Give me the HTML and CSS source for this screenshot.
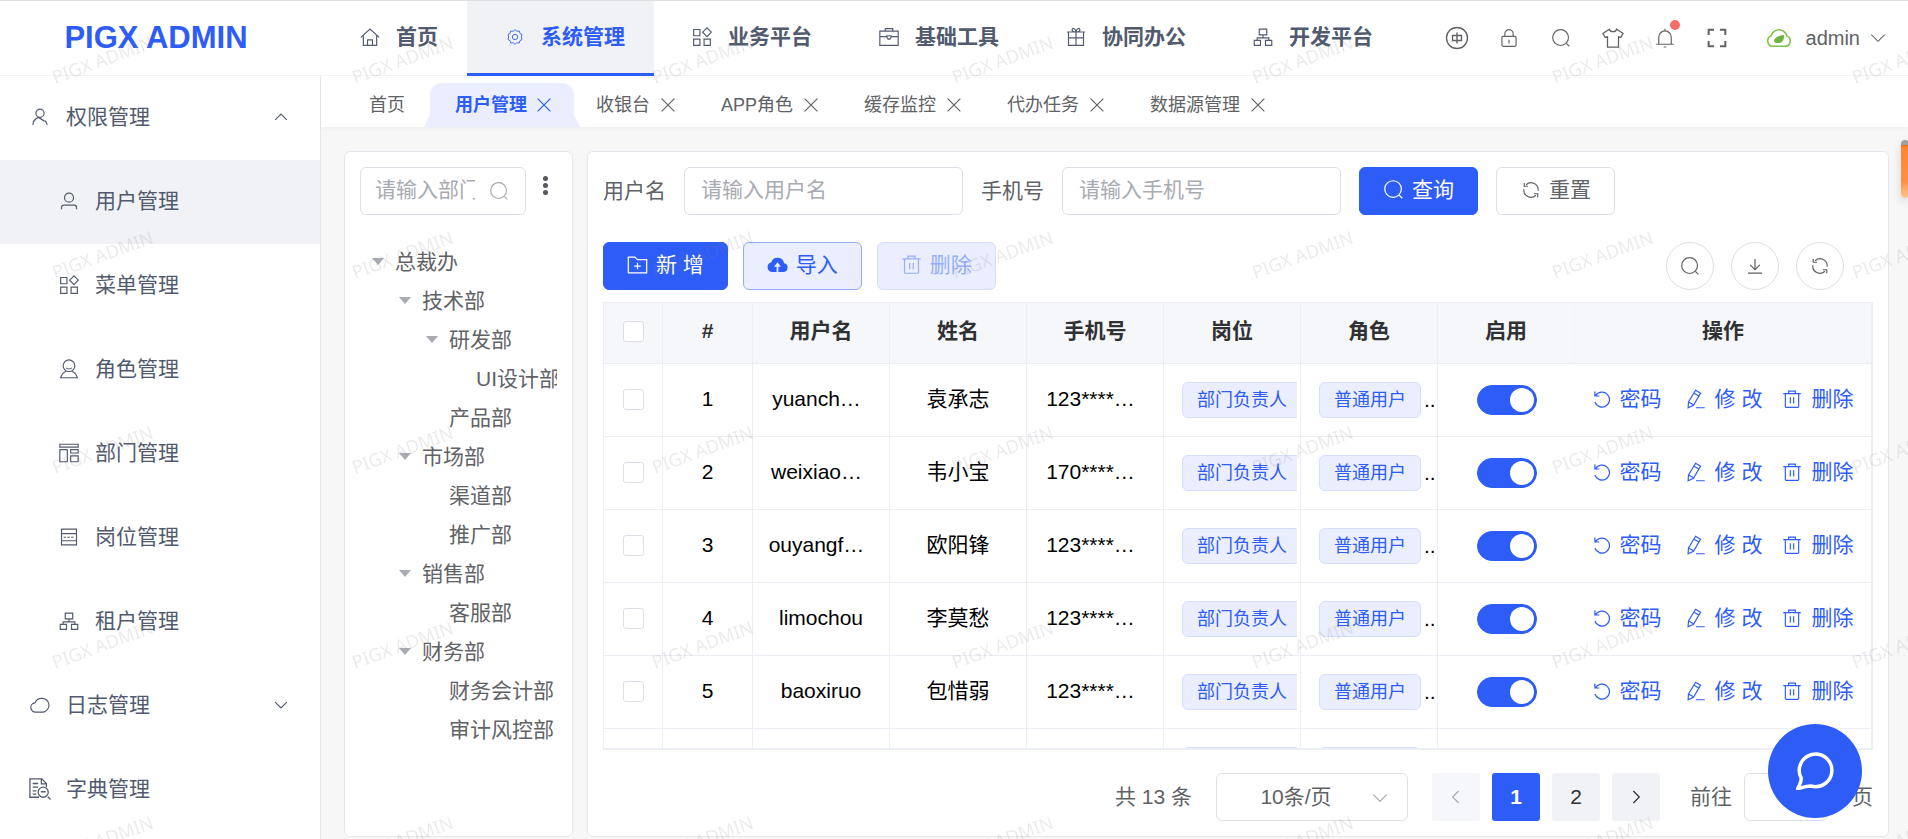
FILE: index.html
```html
<!DOCTYPE html>
<html lang="zh-CN">
<head>
<meta charset="utf-8">
<title>PIGX ADMIN</title>
<link rel="stylesheet" href="styles.css">
</head>
<body>
<svg class="sprite" aria-hidden="true">
  <symbol id="i-home" viewBox="0 0 24 24"><path d="M1 12.500 12 2.500l11 10M4 10v12h16V10M9 22v-6.500h6V22"/></symbol>
  <symbol id="i-gear" viewBox="0 0 24 24"><path d="M12 1l2.800 2.400 3.600-.4 1 3.500 3.100 1.800-1 3.700 1 3.700-3.100 1.800-1 3.500-3.600-.4L12 23l-2.800-2.400-3.600.4-1-3.500-3.100-1.800 1-3.700-1-3.700 3.100-1.800 1-3.500 3.600.4z"/><circle cx="12" cy="12" r="4"/></symbol>
  <symbol id="i-menu" viewBox="0 0 24 24"><path d="M2 3h7.500v7.500H2zM2 14.500h7.500V22H2zM14.500 14.500H22V22h-7.500zM18 1l5.200 5.200L18 11.500l-5.200-5.300z"/></symbol>
  <symbol id="i-case" viewBox="0 0 24 24"><path d="M1 5h22v17H1zM7.500 5V2h9v3M1 11.500h8.500M14.500 11.500H23M9.500 10.500h5v2l-1.500 2h-2l-1.500-2z"/></symbol>
  <symbol id="i-gift" viewBox="0 0 24 24"><path d="M1 6h22M3 6v16h18V6M3 13h18M12 6v16M12 6C8 6 6.500 4 7.500 2.500S11.500 2 12 6c.5-4 3.500-5 4.500-3.500S16 6 12 6"/></symbol>
  <symbol id="i-org" viewBox="0 0 24 24"><path d="M7.500 2.500h9v7h-9zM1.500 16h7.500v6H1.500zM15 16h7.500v6H15zM12 9.500V13M5 16v-3h14v3"/></symbol>
  <symbol id="i-lang" viewBox="0 0 24 24"><circle cx="12" cy="12" r="10.500"/><path d="M7.500 9.500h9v5h-9zM12 6.500v11"/></symbol>
  <symbol id="i-lock" viewBox="0 0 24 24"><path d="M5 10h14a1.500 1.500 0 0 1 1.500 1.500v9A1.500 1.500 0 0 1 19 22H5a1.500 1.500 0 0 1-1.500-1.500v-9A1.500 1.500 0 0 1 5 10zM7 10V7a5 5 0 0 1 10 0v3M12 14v4.500"/></symbol>
  <symbol id="i-search" viewBox="0 0 24 24"><circle cx="11.500" cy="11.500" r="9.500"/><path d="M18.500 18.500 22 22"/></symbol>
  <symbol id="i-shirt" viewBox="0 0 24 24"><path d="M8 2.500 1 7l2.500 4.500L6 10.500V22h12V10.500l2.500 1L23 7l-7-4.500C15 6 9 6 8 2.500z"/></symbol>
  <symbol id="i-bell" viewBox="0 0 24 24"><path d="M12 1v2.500M1.500 19.500h21M4.500 19.500V11a7.500 7.500 0 0 1 15 0v8.500M10.500 22.800h3"/></symbol>
  <symbol id="i-full" viewBox="0 0 24 24"><path d="M2 8.500V2h6.500M15.500 2H22v6.500M22 15.500V22h-6.500M8.500 22H2v-6.500"/></symbol>
  <symbol id="i-down" viewBox="0 0 24 24"><path d="M2 7l10 10L22 7"/></symbol>
  <symbol id="i-up" viewBox="0 0 24 24"><path d="M2 17 12 7l10 10"/></symbol>
  <symbol id="i-left" viewBox="0 0 24 24"><path d="M16 3 7 12l9 9"/></symbol>
  <symbol id="i-right" viewBox="0 0 24 24"><path d="M8 3l9 9-9 9"/></symbol>
  <symbol id="i-close" viewBox="0 0 24 24"><path d="M3.500 3.500l17 17M20.500 3.500l-17 17"/></symbol>
  <symbol id="i-person" viewBox="0 0 24 24"><circle cx="12" cy="7" r="5.500"/><path d="M2.500 22.500c0-5 3-8 7.500-10l8 5M21.500 22.500c0-2-1-4-3-5.500"/></symbol>
  <symbol id="i-user" viewBox="0 0 24 24"><circle cx="12" cy="7.500" r="6"/><path d="M2 23v-2.500a3 3 0 0 1 3-3h14a3 3 0 0 1 3 3V23"/></symbol>
  <symbol id="i-role" viewBox="0 0 24 24"><circle cx="12" cy="8" r="7"/><path d="M8.500 10.500c1.500 2 5.500 2 7 0M8.500 15C5 16 3 19 2 22.500h20c-1-3.500-3-6.500-6.500-7.500"/></symbol>
  <symbol id="i-dept" viewBox="0 0 24 24"><path d="M1 1.500h22V5H1zM1 8h9v14.500H1zM14 8h9v4h-9zM14 15.500h9v7h-9z"/></symbol>
  <symbol id="i-post" viewBox="0 0 24 24"><path d="M3 2.500h18v19H3zM3 8h18M3 16.500h18"/><path d="M5.500 12.300h13" stroke-dasharray="3 1.500"/></symbol>
  <symbol id="i-cloud" viewBox="0 0 24 24"><path d="M7 20.500a5.500 5.500 0 0 1-1-11A8.500 8.500 0 0 1 14 4a8.300 8.300 0 0 1 3 16.200c-1 .3-2 .3-3 .3z"/></symbol>
  <symbol id="i-dict" viewBox="0 0 24 24"><path d="M11 21H1V1h13l5 5v4M13.500 1v5.500H19M4 6h6M4 10h6M4 14h4M4 17.500h4M20.500 20.500 23.500 23.500M13 15h5"/><circle cx="15.500" cy="15.500" r="5.500"/></symbol>
  <symbol id="i-refresh" viewBox="0 0 24 24"><path d="M21.500 13a9.500 9.500 0 0 0-16-8M2.500 11a9.500 9.500 0 0 0 16 8M3 2.500V7h5M21 21.500V17h-5"/></symbol>
  <symbol id="i-addfolder" viewBox="0 0 24 24"><path d="M1.500 3.500h7.500l3 3h10.500v15h-21zM12 10v7.500M8.300 13.800h7.500"/></symbol>
  <symbol id="i-upload" viewBox="0 0 24 24"><path fill="currentColor" stroke="none" d="M13 20.500h5.500a5 5 0 0 0 1-9.900A7.500 7.500 0 0 0 5 9.500a5.600 5.600 0 0 0 .5 11H11v-6H8l4-5 4 5h-3z"/></symbol>
  <symbol id="i-trash" viewBox="0 0 24 24"><path d="M1.500 5.500h21M8 5.500v-3h8v3M4 5.500v15.500a1 1 0 0 0 1 1h14a1 1 0 0 0 1-1V5.500M10 10v7.500M14 10v7.500"/></symbol>
  <symbol id="i-download" viewBox="0 0 24 24"><path d="M12 2.500v14M5.500 10.500l6.500 6.500 6.500-6.500M2.500 21.500h19"/></symbol>
  <symbol id="i-undo" viewBox="0 0 24 24"><path d="M3.500 7.500A10 10 0 1 1 2.500 16M2.500 2v6h6"/></symbol>
  <symbol id="i-edit" viewBox="0 0 24 24"><path d="M11.500 1.500l6 3.500-8.500 14.500-6.500 3 .5-7zM9.500 5l6 3.500M3 15.500l6 3.500M12 22.500h10.500"/></symbol>
  <symbol id="i-leaf" viewBox="0 0 30 24"><path fill="none" stroke="#7dc24b" stroke-width="1.800" d="M8 22a6.500 6.500 0 0 1-2.500-12.500C7 4 12 2 15 2s8 2 9.500 7.500A6.500 6.500 0 0 1 22 22z"/><path fill="#6db33f" stroke="none" d="M9 16.500c0-5 4-7 12-8 .5 6-2.500 10-8 9.500-1.500 0-2.500-.3-3.500-.8z"/></symbol>
  <symbol id="i-chat" viewBox="0 0 24 24"><path stroke-linejoin="round" d="M1 23.300C2.500 20.500 3.400 18.500 3.300 16.500A10.300 10.300 0 1 1 9.500 21.500C6.500 21.500 4 22.300 1 23.300z"/></symbol>
</svg>

<header class="topbar">
  <a class="logo" href="#">PIGX ADMIN</a>
  <nav class="topnav">
    <a href="#"><span class="nav-icon"><svg class="icon"><use href="#i-home"/></svg></span>首页</a>
    <a href="#" class="active"><span class="nav-icon"><svg class="icon thin"><use href="#i-gear"/></svg></span>系统管理</a>
    <a href="#"><span class="nav-icon"><svg class="icon"><use href="#i-menu"/></svg></span>业务平台</a>
    <a href="#"><span class="nav-icon"><svg class="icon"><use href="#i-case"/></svg></span>基础工具</a>
    <a href="#"><span class="nav-icon"><svg class="icon"><use href="#i-gift"/></svg></span>协同办公</a>
    <a href="#"><span class="nav-icon"><svg class="icon"><use href="#i-org"/></svg></span>开发平台</a>
  </nav>
  <div class="tools">
    <button type="button" aria-label="语言"><svg class="icon s24"><use href="#i-lang"/></svg></button>
    <button type="button" aria-label="锁屏"><svg class="icon s20"><use href="#i-lock"/></svg></button>
    <button type="button" aria-label="搜索"><svg class="icon s20"><use href="#i-search"/></svg></button>
    <button type="button" aria-label="主题"><svg class="icon s22"><use href="#i-shirt"/></svg></button>
    <button type="button" aria-label="消息" class="bell"><svg class="icon s20"><use href="#i-bell"/></svg><span class="dot"></span></button>
    <button type="button" aria-label="全屏"><svg class="icon bold s20"><use href="#i-full"/></svg></button>
  </div>
  <button type="button" class="account"><svg class="leaf"><use href="#i-leaf"/></svg>admin<svg class="icon s16"><use href="#i-down"/></svg></button>
</header>

<div class="body">
  <aside class="sidebar">
    <a href="#"><span class="side-icon"><svg class="icon s18"><use href="#i-person"/></svg></span>权限管理<svg class="icon s14 arrow"><use href="#i-up"/></svg></a>
    <a href="#" class="sub active"><span class="side-icon"><svg class="icon s18"><use href="#i-user"/></svg></span>用户管理</a>
    <a href="#" class="sub"><span class="side-icon"><svg class="icon s20"><use href="#i-menu"/></svg></span>菜单管理</a>
    <a href="#" class="sub"><span class="side-icon"><svg class="icon s20"><use href="#i-role"/></svg></span>角色管理</a>
    <a href="#" class="sub"><span class="side-icon"><svg class="icon s20"><use href="#i-dept"/></svg></span>部门管理</a>
    <a href="#" class="sub"><span class="side-icon"><svg class="icon s20"><use href="#i-post"/></svg></span>岗位管理</a>
    <a href="#" class="sub"><span class="side-icon"><svg class="icon s20"><use href="#i-org"/></svg></span>租户管理</a>
    <a href="#"><span class="side-icon"><svg class="icon s20"><use href="#i-cloud"/></svg></span>日志管理<svg class="icon s14 arrow"><use href="#i-down"/></svg></a>
    <a href="#"><span class="side-icon"><svg class="icon s22"><use href="#i-dict"/></svg></span>字典管理</a>
  </aside>

  <div class="content">
    <nav class="tabs">
      <a href="#" class="tab home">首页</a>
      <a href="#" class="tab active">用户管理<svg class="icon s18"><use href="#i-close"/></svg></a>
      <a href="#" class="tab">收银台<svg class="icon s18"><use href="#i-close"/></svg></a>
      <a href="#" class="tab">APP角色<svg class="icon s18"><use href="#i-close"/></svg></a>
      <a href="#" class="tab">缓存监控<svg class="icon s18"><use href="#i-close"/></svg></a>
      <a href="#" class="tab">代办任务<svg class="icon s18"><use href="#i-close"/></svg></a>
      <a href="#" class="tab">数据源管理<svg class="icon s18"><use href="#i-close"/></svg></a>
    </nav>

    <main class="main">
      <section class="panel depts">
        <div class="dept-search">
          <label class="field"><input type="text" placeholder="请输入部门名称" aria-label="部门名称"><svg class="icon s20"><use href="#i-search"/></svg></label>
          <button type="button" class="more" aria-label="更多"><i></i><i></i><i></i></button>
        </div>
        <ul class="tree">
          <li><div class="node"><span class="caret"></span>总裁办</div>
            <ul>
              <li><div class="node"><span class="caret"></span>技术部</div>
                <ul>
                  <li><div class="node"><span class="caret"></span>研发部</div>
                    <ul><li><div class="node leafnode">UI设计部</div></li></ul>
                  </li>
                  <li><div class="node leafnode">产品部</div></li>
                </ul>
              </li>
              <li><div class="node"><span class="caret"></span>市场部</div>
                <ul>
                  <li><div class="node leafnode">渠道部</div></li>
                  <li><div class="node leafnode">推广部</div></li>
                </ul>
              </li>
              <li><div class="node"><span class="caret"></span>销售部</div>
                <ul><li><div class="node leafnode">客服部</div></li></ul>
              </li>
              <li><div class="node"><span class="caret"></span>财务部</div>
                <ul>
                  <li><div class="node leafnode">财务会计部</div></li>
                  <li><div class="node leafnode">审计风控部</div></li>
                </ul>
              </li>
            </ul>
          </li>
        </ul>
      </section>

      <section class="panel users">
        <form class="filters">
          <label for="username">用户名</label>
          <input id="username" type="text" placeholder="请输入用户名">
          <label for="phone">手机号</label>
          <input id="phone" type="text" placeholder="请输入手机号">
          <button type="button" class="btn primary"><svg class="icon s21"><use href="#i-search"/></svg>查询</button>
          <button type="button" class="btn"><svg class="icon s18"><use href="#i-refresh"/></svg>重置</button>
        </form>
        <div class="toolbar">
          <button type="button" class="btn primary"><svg class="icon s21"><use href="#i-addfolder"/></svg>新 增</button>
          <button type="button" class="btn plain"><svg class="icon s21"><use href="#i-upload"/></svg>导入</button>
          <button type="button" class="btn plain" disabled><svg class="icon s21"><use href="#i-trash"/></svg>删除</button>
          <div class="rounds">
            <button type="button" class="round" aria-label="搜索"><svg class="icon s20"><use href="#i-search"/></svg></button>
            <button type="button" class="round" aria-label="下载"><svg class="icon s18"><use href="#i-download"/></svg></button>
            <button type="button" class="round" aria-label="刷新"><svg class="icon s18"><use href="#i-refresh"/></svg></button>
          </div>
        </div>
        <div class="table-box">
          <table>
            <colgroup><col class="c-check"><col class="c-index"><col><col><col><col><col><col><col class="c-actions"></colgroup>
            <thead>
              <tr><th><input type="checkbox" aria-label="全选"></th><th>#</th><th>用户名</th><th>姓名</th><th>手机号</th><th>岗位</th><th>角色</th><th>启用</th><th>操作</th></tr>
            </thead>
            <tbody>
              <tr><td><input type="checkbox" aria-label="选择 1"></td><td>1</td><td class="cut">yuanch…</td><td>袁承志</td><td class="cut">123****…</td>
                <td><div class="cell"><span class="tag">部门负责人</span></div></td><td><div class="cell"><span class="tag">普通用户</span>..</div></td>
                <td><input type="checkbox" class="switch" aria-label="启用" checked></td>
                <td><div class="actions"><button type="button"><svg class="icon s18"><use href="#i-undo"/></svg>密码</button><button type="button"><svg class="icon s20"><use href="#i-edit"/></svg>修 改</button><button type="button"><svg class="icon s20"><use href="#i-trash"/></svg>删除</button></div></td></tr>
              <tr><td><input type="checkbox" aria-label="选择 2"></td><td>2</td><td class="cut">weixiao…</td><td>韦小宝</td><td class="cut">170****…</td>
                <td><div class="cell"><span class="tag">部门负责人</span></div></td><td><div class="cell"><span class="tag">普通用户</span>..</div></td>
                <td><input type="checkbox" class="switch" aria-label="启用" checked></td>
                <td><div class="actions"><button type="button"><svg class="icon s18"><use href="#i-undo"/></svg>密码</button><button type="button"><svg class="icon s20"><use href="#i-edit"/></svg>修 改</button><button type="button"><svg class="icon s20"><use href="#i-trash"/></svg>删除</button></div></td></tr>
              <tr><td><input type="checkbox" aria-label="选择 3"></td><td>3</td><td class="cut">ouyangf…</td><td>欧阳锋</td><td class="cut">123****…</td>
                <td><div class="cell"><span class="tag">部门负责人</span></div></td><td><div class="cell"><span class="tag">普通用户</span>..</div></td>
                <td><input type="checkbox" class="switch" aria-label="启用" checked></td>
                <td><div class="actions"><button type="button"><svg class="icon s18"><use href="#i-undo"/></svg>密码</button><button type="button"><svg class="icon s20"><use href="#i-edit"/></svg>修 改</button><button type="button"><svg class="icon s20"><use href="#i-trash"/></svg>删除</button></div></td></tr>
              <tr><td><input type="checkbox" aria-label="选择 4"></td><td>4</td><td>limochou</td><td>李莫愁</td><td class="cut">123****…</td>
                <td><div class="cell"><span class="tag">部门负责人</span></div></td><td><div class="cell"><span class="tag">普通用户</span>..</div></td>
                <td><input type="checkbox" class="switch" aria-label="启用" checked></td>
                <td><div class="actions"><button type="button"><svg class="icon s18"><use href="#i-undo"/></svg>密码</button><button type="button"><svg class="icon s20"><use href="#i-edit"/></svg>修 改</button><button type="button"><svg class="icon s20"><use href="#i-trash"/></svg>删除</button></div></td></tr>
              <tr><td><input type="checkbox" aria-label="选择 5"></td><td>5</td><td>baoxiruo</td><td>包惜弱</td><td class="cut">123****…</td>
                <td><div class="cell"><span class="tag">部门负责人</span></div></td><td><div class="cell"><span class="tag">普通用户</span>..</div></td>
                <td><input type="checkbox" class="switch" aria-label="启用" checked></td>
                <td><div class="actions"><button type="button"><svg class="icon s18"><use href="#i-undo"/></svg>密码</button><button type="button"><svg class="icon s20"><use href="#i-edit"/></svg>修 改</button><button type="button"><svg class="icon s20"><use href="#i-trash"/></svg>删除</button></div></td></tr>
              <tr><td></td><td></td><td></td><td></td><td></td>
                <td><div class="cell"><span class="tag"></span></div></td><td><div class="cell"><span class="tag"></span></div></td>
                <td></td><td></td></tr>
            </tbody>
          </table>
        </div>
        <div class="pager">
          <span>共 13 条</span>
          <div class="size"><select aria-label="每页条数"><option>10条/页</option></select><svg class="icon s16"><use href="#i-down"/></svg></div>
          <div class="pages">
            <button type="button" disabled aria-label="上一页"><svg class="icon s16"><use href="#i-left"/></svg></button>
            <button type="button" class="current">1</button>
            <button type="button">2</button>
            <button type="button" aria-label="下一页"><svg class="icon s16"><use href="#i-right"/></svg></button>
          </div>
          <label class="jump">前往<input type="text" aria-label="页码"><span>页</span></label>
        </div>
      </section>
    </main>
  </div>
</div>

<div class="side-handle"></div>
<button type="button" class="chat" aria-label="客服"><svg class="icon"><use href="#i-chat"/></svg></button>
<svg class="watermark" aria-hidden="true">
  <defs><pattern id="wm" width="300" height="195" patternUnits="userSpaceOnUse"><text x="55" y="84" transform="rotate(-20 55 84)">PIGX ADMIN</text></pattern></defs>
  <rect width="100%" height="100%" fill="url(#wm)"/>
</svg>
</body>
</html>
```

FILE: styles.css
```css
:root {
  --blue: #2e5cf6;
  --blue-light: #eaeefe;
  --blue-line: #d5defd;
  --slate: #515a6e;
  --text: #606266;
  --line: #ebeef5;
  --field-line: #dcdfe6;
  --muted: #a8abb2;
}

* { box-sizing: border-box; }

body {
  margin: 0;
  height: 100vh;
  display: flex;
  flex-direction: column;
  overflow: hidden;
  font: 21px/30px "Liberation Sans", "Noto Sans CJK SC", sans-serif;
  color: var(--text);
  background: #f7f7f8;
}

a { color: inherit; text-decoration: none; }
button, input, select { font: inherit; color: inherit; }
button { border: 0; background: none; padding: 0; cursor: pointer; }
ul { list-style: none; margin: 0; padding: 0; }
.sprite { display: none; }

.icon {
  width: 20px;
  height: 20px;
  flex: none;
  fill: none;
  stroke: currentColor;
  stroke-width: 1.4;
  overflow: visible;
}
.icon.bold { stroke-width: 2.4; }
.s14 { width: 14px; height: 14px; stroke-width: 2; }
.s16 { width: 16px; height: 16px; stroke-width: 1.8; }
.s18 { width: 18px; height: 18px; stroke-width: 1.6; }
.s20 { width: 20px; height: 20px; }
.s21 { width: 21px; height: 21px; }
.s22 { width: 22px; height: 22px; }
.s24 { width: 24px; height: 24px; }
.icon.thin { width: 16px; height: 16px; stroke-width: 1.3; }

/* Header */
.topbar {
  display: flex;
  flex: none;
  height: 76px;
  border-top: 1px solid #e0e0e0;
  border-bottom: 1px solid #f1f2f3;
  background: #fff;
}
.logo {
  width: 322px;
  flex: none;
  display: flex;
  align-items: center;
  justify-content: center;
  padding-right: 10px;
  font-size: 31px;
  font-weight: bold;
  color: var(--blue);
}
.topnav { display: flex; flex: 1; margin-bottom: -1px; }
.topnav a {
  display: flex;
  align-items: center;
  gap: 8px;
  padding: 0 29px 3px 30px;
  font-weight: bold;
  color: var(--slate);
  white-space: nowrap;
}
.topnav a.active {
  background: #f0f2f5;
  color: var(--blue);
  padding-bottom: 0;
  border-bottom: 3px solid var(--blue);
}
.nav-icon { width: 36px; display: flex; justify-content: center; }
.tools { display: flex; align-items: center; }
.tools button { width: 52px; height: 52px; display: grid; place-items: center; position: relative; }
.dot {
  position: absolute;
  top: 8px;
  right: 11px;
  width: 10px;
  height: 10px;
  border-radius: 50%;
  background: #f56c6c;
}
.account {
  display: flex;
  align-items: center;
  gap: 14px;
  margin: 0 22px 0 23px;
  font-size: 20px;
}
.account .icon { margin-left: -4px; stroke-width: 1.6; }
.leaf { width: 26px; height: 20px; }

/* Sidebar */
.body { display: flex; flex: 1; min-height: 0; }
.sidebar {
  width: 321px;
  flex: none;
  overflow: hidden;
  background: #fff;
  border-right: 1px solid #e4e7f0;
}
.sidebar a {
  display: flex;
  align-items: center;
  height: 84px;
  gap: 8px;
  padding: 0 32px 2px 22px;
  color: var(--slate);
}
.sidebar .sub { padding-left: 51px; }
.sidebar .active { background: #f0f2f5; }
.side-icon { width: 36px; display: flex; justify-content: center; }
.arrow { margin-left: auto; }

/* Tabs */
.content { flex: 1; min-width: 0; display: flex; flex-direction: column; }
.tabs {
  display: flex;
  flex: none;
  height: 51px;
  padding: 7px 0 0 26px;
  background: #fff;
  box-shadow: 0 2px 4px rgba(0, 0, 0, .03);
}
.tab {
  display: flex;
  align-items: center;
  gap: 9px;
  padding: 0 22px;
  font-size: 18px;
  white-space: nowrap;
}
.tab.home { padding-right: 25px; }
.tab.active {
  position: relative;
  gap: 8px;
  padding: 0 21px 0 25px;
  border-radius: 12px 12px 0 0;
  background: var(--blue-light);
  color: var(--blue);
  font-weight: bold;
}
.tab.active::before, .tab.active::after {
  content: "";
  position: absolute;
  bottom: 0;
  width: 6px;
  height: 12px;
  background: var(--blue-light);
}
.tab.active::before { right: 100%; clip-path: polygon(100% 0, 100% 100%, 0 100%); }
.tab.active::after { left: 100%; clip-path: polygon(0 0, 100% 100%, 0 100%); }

/* Panels */
.main { flex: 1; min-height: 0; display: flex; gap: 14px; padding: 24px 19px 2px 23px; }
.panel { background: #fff; border: 1px solid #e4e7ed; border-radius: 6px; padding: 15px; }
.depts { width: 229px; flex: none; overflow: hidden; }
.users { flex: 1; min-width: 0; display: flex; flex-direction: column; }

input[type="text"], select {
  height: 48px;
  padding: 0 16px 3px;
  border: 1px solid var(--field-line);
  border-radius: 6px;
  background: #fff;
  outline: 0;
}
::placeholder { color: var(--muted); opacity: 1; }

.dept-search { display: flex; align-items: flex-start; justify-content: space-between; }
.field {
  display: flex;
  align-items: center;
  width: 166px;
  height: 48px;
  padding: 0 16px 0 14px;
  gap: 14px;
  border: 1px solid var(--field-line);
  border-radius: 6px;
  color: var(--muted);
}
.field input { flex: 1; width: 0; height: 46px; padding: 0 0 3px; border: 0; }
.more { display: flex; flex-direction: column; gap: 2px; padding: 9px 9px 0; }
.more i { width: 5px; height: 5px; border-radius: 50%; background: #55585e; }

.tree { margin-top: 27px; padding-left: 9px; }
.tree ul { padding-left: 27px; }
.node { display: flex; align-items: center; gap: 8px; height: 39px; white-space: nowrap; overflow: hidden; }
.leafnode { padding-left: 26px; }
.caret { width: 18px; display: grid; place-items: center; }
.caret::before {
  content: "";
  border: 6px solid transparent;
  border-top: 7px solid var(--muted);
  border-bottom: 0;
}

/* Filters and toolbar */
.filters, .toolbar { display: flex; align-items: center; }
.filters { gap: 18px; }
.filters input { width: 279px; }
.toolbar { gap: 15px; margin: 27px 0 12px; }
.btn {
  display: flex;
  align-items: center;
  gap: 8px;
  height: 48px;
  padding: 0 23px 3px;
  border: 1px solid var(--field-line);
  border-radius: 6px;
  background: #fff;
  white-space: nowrap;
}
.btn .s18 { margin: 0 1px 0 2px; }
.btn.primary { background: var(--blue); border-color: var(--blue); color: #fff; }
.btn.plain { background: var(--blue-light); border-color: #94abfa; color: var(--blue); }
.btn.plain:disabled { border-color: var(--blue-line); color: #96aefb; }
.rounds { display: flex; gap: 17px; margin: 0 29px 0 auto; }
.round {
  width: 48px;
  height: 48px;
  display: grid;
  place-items: center;
  border: 1px solid var(--field-line);
  border-radius: 50%;
}

/* Table */
.table-box {
  flex: 1;
  min-height: 0;
  overflow: hidden;
  border: 1px solid var(--line);
  border-right-width: 2px;
  border-bottom-width: 2px;
}
table { width: 100%; table-layout: fixed; border-collapse: separate; border-spacing: 0; color: #000; }
.c-check { width: 59px; }
.c-index { width: 90px; }
.c-actions { width: 296px; }
th, td {
  padding: 0 3px 2px;
  text-align: center;
  border-right: 1px solid var(--line);
  border-bottom: 1px solid var(--line);
  white-space: nowrap;
  overflow: hidden;
}
th { height: 61px; padding-bottom: 4px; background: #f5f7fa; color: #303133; }
td { height: 73px; }
td:nth-child(6), td:nth-child(7), td:nth-child(8) { padding-bottom: 0; }
td:nth-last-child(-n+2), th:last-child { border-right: 0; }
th:nth-last-child(2) { border-right-color: #f0f3f9; }
td.cut { padding-right: 12px; }
.cell { display: flex; align-items: center; gap: 3px; padding-left: 15px; overflow: hidden; }
.tag {
  flex: none;
  height: 36px;
  min-width: 120px;
  padding: 0 14px;
  border: 1px solid var(--blue-line);
  border-radius: 6px;
  background: var(--blue-light);
  color: var(--blue);
  font-size: 18px;
  line-height: 34px;
}
td:nth-child(7) .tag { min-width: 102px; }

table input {
  appearance: none;
  display: block;
  margin: 0 auto;
  width: 21px;
  height: 21px;
  border: 1px solid var(--field-line);
  border-radius: 3px;
  background: #fff;
}
table .switch {
  width: 60px;
  height: 30px;
  padding: 2px;
  border: 1px solid var(--blue);
  border-radius: 15px;
  background: var(--blue);
}
.switch::before {
  content: "";
  display: block;
  width: 24px;
  height: 24px;
  margin-left: auto;
  border-radius: 50%;
  background: #fff;
}
.actions { display: flex; justify-content: center; gap: 20px; color: var(--blue); }
.actions button { display: flex; align-items: center; gap: 9px; }
.actions button:first-child { margin-right: 4px; }

/* Pagination */
.pager { display: flex; align-items: center; justify-content: flex-end; margin-top: 23px; gap: 24px; }
.size { position: relative; width: 192px; }
.size select { appearance: none; width: 100%; padding: 0 48px 0 16px; text-align: center; text-align-last: center; }
.size .icon { position: absolute; right: 20px; top: 17px; color: var(--muted); pointer-events: none; }
.pages { display: flex; gap: 12px; }
.pages button {
  width: 48px;
  height: 48px;
  display: grid;
  place-items: center;
  border-radius: 3px;
  background: #f0f2f5;
  color: #303133;
}
.pages button:disabled { background: #f5f7fa; color: var(--muted); }
.pages .current { background: var(--blue); color: #fff; font-weight: bold; }
.jump { display: flex; align-items: center; gap: 12px; padding-left: 6px; }
.jump input { width: 84px; }
.jump span { padding-left: 12px; }

/* Floating layers */
.side-handle {
  position: fixed;
  right: -1px;
  top: 140px;
  width: 8px;
  height: 58px;
  border-radius: 4px;
  background: linear-gradient(#a0a0a0 5px, #e8701a 5px, #ff8534 8px, #ff8f45 70%, #ffc48f);
  box-shadow: 0 3px 8px rgba(0, 0, 0, .15);
}
.chat {
  position: fixed;
  right: 46px;
  bottom: 21px;
  width: 94px;
  height: 94px;
  display: grid;
  place-items: center;
  border-radius: 50%;
  background: var(--blue);
  color: #fff;
}
.chat .icon { width: 38px; height: 38px; stroke-width: 2.2; }
.watermark { position: fixed; inset: 0; width: 100%; height: 100%; pointer-events: none; }
.watermark text { font: 18px "Noto Sans", sans-serif; fill: rgba(130, 130, 130, .16); }
```
